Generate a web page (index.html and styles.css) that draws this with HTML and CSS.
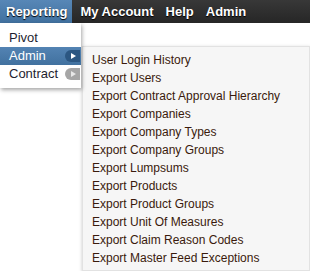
FILE: index.html
```html
<!DOCTYPE html>
<html lang="en">
<head>
  <meta charset="UTF-8" />
  <title>Reporting Menu</title>
  <link rel="stylesheet" href="styles.css">
</head>
<body>

  <ul class="navbar">
    <li class="nav-item active">Reporting</li>
    <li class="nav-item">My Account</li>
    <li class="nav-item">Help</li>
    <li class="nav-item">Admin</li>
  </ul>

  <div class="menu-wrap">
    <ul class="dropdown">
      <li class="drop-item">Pivot</li>
      <li class="drop-item selected">Admin <span class="arrow"></span></li>
      <li class="drop-item">Contract <span class="arrow grey"></span></li>
    </ul>

    <!-- Admin flyout -->
    <ul class="submenu">
      <li>User Login History</li>
      <li>Export Users</li>
      <li>Export Contract Approval Hierarchy</li>
      <li>Export Companies</li>
      <li>Export Company Types</li>
      <li>Export Company Groups</li>
      <li>Export Lumpsums</li>
      <li>Export Products</li>
      <li>Export Product Groups</li>
      <li>Export Unit Of Measures</li>
      <li>Export Claim Reason Codes</li>
      <li>Export Master Feed Exceptions</li>
    </ul>
  </div>

</body>
</html>
```

FILE: styles.css
```css
body {
  margin: 0;
  font-family: Arial, "Liberation Sans", sans-serif;
  background: #fff;
}
ul {
  list-style: none;
  margin: 0;
  padding: 0;
}
.navbar {
  display: flex;
  height: 23px;
  background: linear-gradient(#383838, #262626);
}
.nav-item {
  padding: 0 5px;
  margin-right: 2px;
  line-height: 23px;
  font-size: 13px;
  font-weight: bold;
  color: #fff;
  text-shadow: 0 1px 1px #000;
}
.nav-item.active {
  padding: 0 5px 0 6px;
  margin-right: 3px;
  background: linear-gradient(#5787b7, #41719f);
}
.menu-wrap {
  display: flex;
  align-items: flex-start;
}
.dropdown {
  width: 81px;
  padding: 6px 0 5px;
  background: #fff;
  box-shadow: 1px 2px 4px rgba(0,0,0,0.35);
  position: relative;
  z-index: 1;
}
.drop-item {
  position: relative;
  height: 18px;
  line-height: 18px;
  padding-left: 9px;
  font-size: 13px;
  color: #1e1e30;
}
.drop-item.selected {
  background: linear-gradient(#5383b3, #41719f);
  color: #fff;
}
.arrow {
  position: absolute;
  right: 1px;
  top: 3px;
  width: 15px;
  height: 12px;
  border-radius: 6px 0 0 6px;
  background: #2c5782;
}
.arrow::after {
  content: "";
  position: absolute;
  left: 6px;
  top: 3px;
  border-left: 5px solid #fff;
  border-top: 3px solid transparent;
  border-bottom: 3px solid transparent;
}
.arrow.grey {
  background: #a6a6a6;
}
.arrow.grey::after {
  border-left-color: #e8e8e8;
}
.submenu {
  margin: 23px 0 0 1px;
  width: 217px;
  padding: 4px 0 3px 9px;
  background: #f6f6f6;
  border: 1px solid #e2e2e2;
  box-shadow: 1px 2px 4px rgba(0,0,0,0.35);
}
.submenu li {
  height: 18px;
  line-height: 18px;
  font-size: 12px;
  color: #3a1a0c;
}
```
